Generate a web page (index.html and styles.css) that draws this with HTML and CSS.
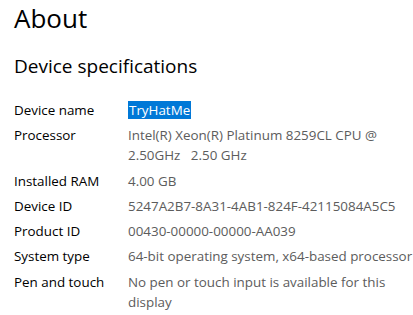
FILE: index.html
```html
<!DOCTYPE html>
<html lang="en">

<head>
    <meta charset="UTF-8">
    <meta name="viewport" content="width=device-width, initial-scale=1.0">
    <title>About</title>
    <link rel="stylesheet" href="styles.css">
</head>

<body>

    <div class="page">
        <h1 class="title">About</h1>
        <h2 class="subtitle">Device specifications</h2>

        <dl class="specs">
            <dt>Device name</dt>
            <dd><span class="selected">TryHatMe</span></dd>

            <dt>Processor</dt>
            <dd>Intel(R) Xeon(R) Platinum 8259CL CPU @ 2.50GHz&nbsp;&nbsp;&nbsp;2.50 GHz</dd>

            <dt>Installed RAM</dt>
            <dd>4.00 GB</dd>

            <dt>Device ID</dt>
            <dd>5247A2B7-8A31-4AB1-824F-42115084A5C5</dd>

            <dt>Product ID</dt>
            <dd>00430-00000-00000-AA039</dd>

            <dt>System type</dt>
            <dd>64-bit operating system, x64-based processor</dd>

            <dt>Pen and touch</dt>
            <dd>No pen or touch input is available for this display</dd>
        </dl>
    </div>

</body>

</html>
```

FILE: styles.css
```css
html,
body {
    margin: 0
}

body {
    background: #fff;
    font-family: "Open Sans", "Noto Sans", sans-serif;
    color: #000;
}

.page {
    padding: 0 0 0 14px;
}

.title {
    margin: 0;
    padding-top: 1px;
    font-size: 26px;
    font-weight: 400;
    line-height: 34px;
}

.subtitle {
    margin: 0;
    padding-top: 18px;
    font-size: 19px;
    font-weight: 400;
    line-height: 26px;
}

.specs {
    display: grid;
    grid-template-columns: 114px 1fr;
    row-gap: 5.3px;
    margin: 21px 0 0;
    font-size: 13.4px;
    line-height: 20px;
}

.specs dt {
    margin: 0;
}

.specs dd {
    margin: 0;
    max-width: 295px;
    color: #5c5c5c;
}

.selected {
    background: #0078d7;
    color: #fff;
    padding: 0 1px;
}
```
